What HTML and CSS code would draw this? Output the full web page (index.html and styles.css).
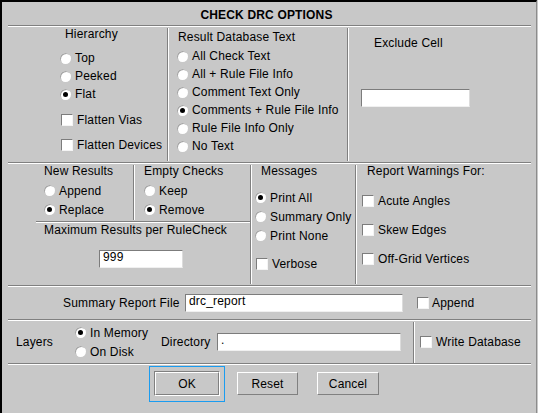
FILE: index.html
```html
<!DOCTYPE html>
<html>
<head>
<meta charset="utf-8">
<title>Check DRC Options</title>
<link rel="stylesheet" href="styles.css">
</head>
<body>
<div class="dialog">
  <div class="title">CHECK DRC OPTIONS</div>
  <div class="hsep"></div>

  <div class="sec sec-top">
    <div class="col hier">
      <div class="lbl">Hierarchy</div>
      <div class="opts">
        <div class="opt"><span class="radio"></span><span>Top</span></div>
        <div class="opt"><span class="radio"></span><span>Peeked</span></div>
        <div class="opt"><span class="radio on"></span><span>Flat</span></div>
      </div>
      <div class="checks">
        <div class="opt"><span class="check"></span><span>Flatten Vias</span></div>
        <div class="opt"><span class="check"></span><span>Flatten Devices</span></div>
      </div>
    </div>
    <div class="vsep"></div>
    <div class="col rdb">
      <div class="lbl">Result Database Text</div>
      <div class="opts">
        <div class="opt"><span class="radio"></span><span>All Check Text</span></div>
        <div class="opt"><span class="radio"></span><span>All + Rule File Info</span></div>
        <div class="opt"><span class="radio"></span><span>Comment Text Only</span></div>
        <div class="opt"><span class="radio on"></span><span>Comments + Rule File Info</span></div>
        <div class="opt"><span class="radio"></span><span>Rule File Info Only</span></div>
        <div class="opt"><span class="radio"></span><span>No Text</span></div>
      </div>
    </div>
    <div class="vsep"></div>
    <div class="col excl">
      <div class="lbl">Exclude Cell</div>
      <div class="field excl-field"></div>
    </div>
  </div>
  <div class="hsep"></div>

  <div class="sec sec-mid">
    <div class="results">
      <div class="results-top">
        <div class="col newres">
          <div class="lbl">New Results</div>
          <div class="opts">
            <div class="opt"><span class="radio"></span><span>Append</span></div>
            <div class="opt"><span class="radio on"></span><span>Replace</span></div>
          </div>
        </div>
        <div class="vsep"></div>
        <div class="col empty">
          <div class="lbl">Empty Checks</div>
          <div class="opts">
            <div class="opt"><span class="radio"></span><span>Keep</span></div>
            <div class="opt"><span class="radio on"></span><span>Remove</span></div>
          </div>
        </div>
      </div>
      <div class="hsep max-sep"></div>
      <div class="maxres">
        <div class="lbl">Maximum Results per RuleCheck</div>
        <div class="field max-field">999</div>
      </div>
    </div>
    <div class="vsep"></div>
    <div class="col msgs">
      <div class="lbl">Messages</div>
      <div class="opts">
        <div class="opt"><span class="radio on"></span><span>Print All</span></div>
        <div class="opt"><span class="radio"></span><span>Summary Only</span></div>
        <div class="opt"><span class="radio"></span><span>Print None</span></div>
      </div>
      <div class="opt verbose"><span class="check"></span><span>Verbose</span></div>
    </div>
    <div class="vsep"></div>
    <div class="col warn">
      <div class="lbl">Report Warnings For:</div>
      <div class="warn-list">
        <div class="opt"><span class="check"></span><span>Acute Angles</span></div>
        <div class="opt"><span class="check"></span><span>Skew Edges</span></div>
        <div class="opt"><span class="check"></span><span>Off-Grid Vertices</span></div>
      </div>
    </div>
  </div>
  <div class="hsep"></div>

  <div class="sec sec-summary">
    <div class="sum-lbl">Summary Report File</div>
    <div class="field sum-field">drc_report</div>
    <div class="opt sum-append"><span class="check"></span><span>Append</span></div>
  </div>
  <div class="hsep"></div>

  <div class="sec sec-layers">
    <div class="layers-lbl">Layers</div>
    <div class="layers-opts">
      <div class="opt"><span class="radio on"></span><span>In Memory</span></div>
      <div class="opt"><span class="radio"></span><span>On Disk</span></div>
    </div>
    <div class="dir-lbl">Directory</div>
    <div class="field dir-field">.</div>
    <div class="vsep"></div>
    <div class="opt write-db"><span class="check"></span><span>Write Database</span></div>
  </div>
  <div class="hsep"></div>

  <div class="buttons">
    <div class="focus-ring">
      <div class="default-frame"><div class="btn btn-ok">OK</div></div>
    </div>
    <div class="btn btn-reset">Reset</div>
    <div class="btn btn-cancel">Cancel</div>
  </div>
</div>
</body>
</html>
```

FILE: styles.css
```css
html, body {
  margin: 0;
  padding: 0;
  background: #c8c8c8;
}

.dialog {
  width: 537px;
  height: 413px;
  box-sizing: border-box;
  border-top: 2px solid #000;
  border-left: 2px solid #000;
  border-right: 1px solid #8c8c8c;
  background: #c8c8c8;
  padding: 0 5px 0 6px;
  display: flex;
  flex-direction: column;
  font-family: "Liberation Sans", Arial, Helvetica, sans-serif;
  font-size: 12px;
  line-height: 14px;
  letter-spacing: 0.17px;
  color: #000;
}

.title {
  height: 23px;
  box-sizing: border-box;
  padding: 6px 6px 0 0;
  text-align: center;
  font-weight: bold;
}

.hsep {
  flex: none;
  height: 0;
  border-top: 1px solid #808080;
  border-bottom: 1px solid #fff;
}

.vsep {
  flex: none;
  width: 0;
  border-left: 1px solid #808080;
  border-right: 1px solid #fff;
  margin: 1px 0 1px;
}

.sec {
  display: flex;
  flex: none;
}

.col {
  display: flex;
  flex-direction: column;
  box-sizing: border-box;
}

.opt {
  display: flex;
  align-items: center;
  gap: 4px;
  height: 18px;
  white-space: nowrap;
}

.radio {
  flex: none;
  width: 11px;
  height: 11px;
  border-radius: 50%;
  background: #fff;
  box-shadow: inset 1px 1px 0 #a4a4a4;
  display: flex;
  align-items: center;
  justify-content: center;
}

.radio.on::after {
  content: "";
  width: 5px;
  height: 5px;
  border-radius: 50%;
  background: #000;
}

.check {
  flex: none;
  width: 12px;
  height: 12px;
  box-sizing: border-box;
  background: #fff;
  border-top: 1px solid #7c7c7c;
  border-left: 1px solid #7c7c7c;
  border-right: 1px solid #f4f4f4;
  border-bottom: 1px solid #f4f4f4;
}

.field {
  box-sizing: border-box;
  height: 18px;
  background: #fff;
  border-top: 1px solid #7c7c7c;
  border-left: 1px solid #7c7c7c;
  border-right: 1px solid #dcdcdc;
  border-bottom: 1px solid #f0f0f0;
  padding: 0 3px;
  line-height: 13px;
  white-space: nowrap;
}

/* ---------- top section ---------- */
.sec-top {
  height: 135px;
}

.hier {
  width: 159px;
}
.hier .lbl {
  padding-left: 57px;
}
.hier .opts {
  margin-top: 8px;
  padding-left: 52px;
}
.hier .checks {
  margin-top: 8px;
  padding-left: 53px;
  display: flex;
  flex-direction: column;
  gap: 7px;
}

.rdb {
  width: 178px;
}
.rdb .lbl {
  margin-top: 3px;
  padding-left: 9px;
}
.rdb .opts {
  margin-top: 3px;
  padding-left: 8px;
}

.excl {
  width: 182px;
}
.excl .lbl {
  margin-top: 9px;
  padding-left: 25px;
}
.excl-field {
  margin-top: 39px;
  margin-left: 12px;
  width: 109px;
}

/* ---------- middle section ---------- */
.sec-mid {
  height: 121px;
}

.results {
  width: 242px;
  display: flex;
  flex-direction: column;
}
.results-top {
  display: flex;
  height: 57px;
}
.results .opt {
  height: 19px;
}
.newres {
  width: 125px;
  padding-left: 36px;
}
.empty {
  width: 115px;
  padding-left: 9px;
}
.newres .opts,
.empty .opts {
  margin-top: 3px;
}
.max-sep {
  margin-left: 28px;
}
.maxres .lbl {
  padding-left: 36px;
}
.max-field {
  margin-top: 13px;
  margin-left: 91px;
  width: 84px;
}

.msgs {
  width: 103px;
}
.msgs .lbl {
  padding-left: 9px;
}
.msgs .opt {
  height: 19px;
}
.msgs .opts {
  margin-top: 10px;
  padding-left: 3px;
}
.msgs .verbose {
  margin-top: 9px;
  padding-left: 4px;
}

.warn {
  width: 174px;
}
.warn .lbl {
  padding-left: 10px;
}
.warn-list {
  margin-top: 13px;
  padding-left: 5px;
  display: flex;
  flex-direction: column;
  gap: 10px;
}
.warn-list .opt {
  height: 19px;
}

/* ---------- summary row ---------- */
.sec-summary {
  height: 32px;
  align-items: center;
  padding-left: 55px;
}
.sum-lbl {
  width: 122px;
}
.sum-field {
  width: 218px;
}
.sum-append {
  margin-left: 14px;
  gap: 3px;
}

/* ---------- layers row ---------- */
.sec-layers {
  height: 42px;
  align-items: center;
  padding-left: 8px;
}
.layers-lbl {
  width: 59px;
}
.layers-opts {
  width: 86px;
}
.layers-opts .opt {
  height: 19px;
}
.dir-lbl {
  width: 56px;
}
.dir-field {
  width: 184px;
}
.sec-layers .vsep {
  align-self: stretch;
  margin: 1px 0 0 12px;
}
.write-db {
  margin-left: 5px;
}

/* ---------- buttons ---------- */
.buttons {
  flex: 1;
  display: flex;
  align-items: flex-start;
  padding: 1px 0 0 141px;
}

.focus-ring {
  box-sizing: border-box;
  width: 76px;
  height: 36px;
  border: 1px solid #1a9cf0;
  padding: 4px 4px 0 4px;
}

.default-frame {
  box-sizing: border-box;
  height: 25px;
  border-top: 1px solid #808080;
  border-left: 1px solid #808080;
  border-right: 1px solid #fff;
  border-bottom: 1px solid #fff;
  display: flex;
}

.btn {
  box-sizing: border-box;
  display: flex;
  align-items: center;
  justify-content: center;
  border-top: 1px solid #fff;
  border-left: 1px solid #fff;
  border-right: 1px solid #808080;
  border-bottom: 1px solid #808080;
  height: 23px;
}

.btn-ok {
  flex: 1;
  height: auto;
}

.btn-reset {
  margin-top: 6px;
  margin-left: 12px;
  width: 61px;
}

.btn-cancel {
  margin-top: 6px;
  margin-left: 19px;
  width: 62px;
}
```
